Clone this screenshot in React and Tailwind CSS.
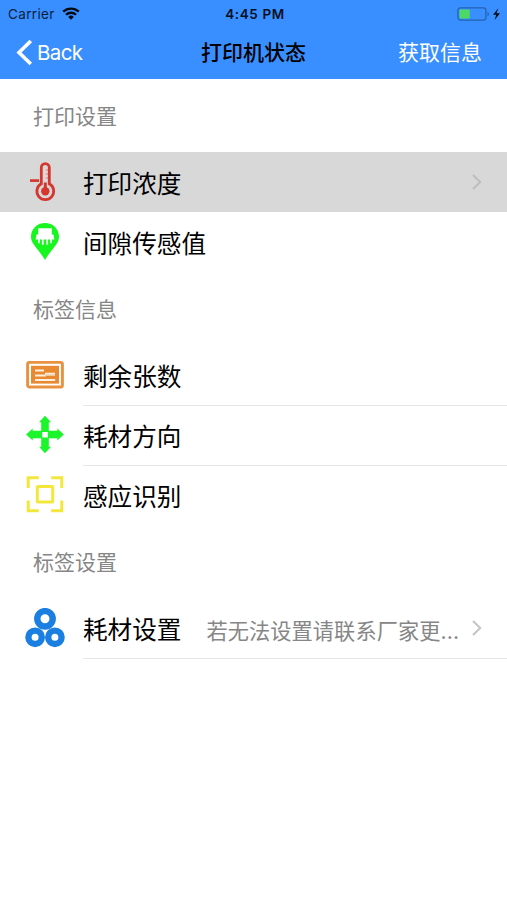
import React from 'react';

const ThermometerIcon = () => (
  <svg className="w-[40px] h-[40px]" viewBox="0 0 40 40" fill="none" stroke="#d5372f">
    <path strokeWidth="2.8" d="M16.3 21.8V5.600a4 4 0 0 1 8 0V21.800a8.400 8.400 0 1 1-8 0z" />
    <path strokeWidth="2.7" d="M5 18.600H14" />
    <path strokeWidth="3" d="M20.300 20.500v7" />
    <circle cx="20.300" cy="29.300" r="4.200" fill="#d5372f" stroke="none" />
    <path strokeWidth="2.200" stroke="#eed6d4" d="M20.300 6v13" />
    <path strokeWidth="1" strokeOpacity="0.5" d="M20.500 8h3M20.500 12h3M20.500 16h3" />
  </svg>
);

const SensorIcon = () => (
  <svg className="w-[40px] h-[40px]" viewBox="0 0 40 40">
    <path fill="#17f61f" d="M20 1C12 1 6 7 6 14.800c0 7.600 6.500 10.500 14 23.200 7.500-12.700 14-15.600 14-23.200C34 7 28 1 20 1z" />
    <path
      fill="#fff"
      d="M13.200 6.300h13.600v6.200h1.600l1 5.100h-2.500v3.600h-1.700v-3.600h-2.100v5.200h-1.700v-5.200h-2.800v5.200h-1.700v-5.200h-2.100v3.600h-1.700v-3.600h-2.500l1-5.100h1.600z"
    />
  </svg>
);

const LabelIcon = () => (
  <svg className="w-[40px] h-[40px]" viewBox="0 0 40 40" fill="none">
    <rect x="2.600" y="7.400" width="34.800" height="24.600" rx="1.800" stroke="#e9913f" strokeWidth="2.900" />
    <rect x="6" y="10.800" width="28" height="17.800" fill="#e98a33" />
    <path stroke="#fdf0e2" strokeWidth="2" d="M10 15.500h9M20 18.800h10M10 20.500h11M10 25h20.200" />
    <path stroke="#f6cfa6" strokeWidth="1" d="M20 20.400h10" />
  </svg>
);

const DirectionIcon = () => (
  <svg className="w-[40px] h-[40px]" viewBox="0 0 40 40" fill="#1bf52b">
    <path
      fillRule="evenodd"
      d="M20 .8l6 6.400h-2.200v8.500h8.500v-2.200L38.900 19.500l-6.600 6v-2.200h-8.500v8.500H26l-6 6.400-6-6.400h2.200v-8.500H7.700v2.200l-6.600-6 6.600-6v2.200h8.500V7.200H14zM17.200 16.900v5.500h5.600v-5.500z"
    />
  </svg>
);

const ScanIcon = () => (
  <svg className="w-[40px] h-[40px]" viewBox="0 0 40 40" fill="none" stroke="#f4e73c">
    <path strokeWidth="3" d="M3.200 13V2.700H13.800M26.200 2.700h10.600V13M36.800 25.500v10.200H26.200M13.800 35.700H3.200V25.500" />
    <rect x="12.300" y="11.600" width="15.400" height="15.400" rx="0.600" strokeWidth="3" />
  </svg>
);

const RollsIcon = () => (
  <svg className="w-[40px] h-[40px]" viewBox="0 0 40 40" fill="none" stroke="#1a7fe0" strokeWidth="6.400">
    <circle cx="20" cy="10.800" r="7.700" />
    <circle cx="10.100" cy="29.300" r="6.700" />
    <circle cx="29.900" cy="29.300" r="6.700" />
  </svg>
);

const sections = [
  {
    title: '打印设置',
    rows: [
      { icon: <ThermometerIcon />, label: '打印浓度', arrow: true, active: true },
      { icon: <SensorIcon />, label: '间隙传感值' },
    ],
  },
  {
    title: '标签信息',
    rows: [
      { icon: <LabelIcon />, label: '剩余张数', line: true },
      { icon: <DirectionIcon />, label: '耗材方向', line: true },
      { icon: <ScanIcon />, label: '感应识别' },
    ],
  },
  {
    title: '标签设置',
    rows: [
      { icon: <RollsIcon />, label: '耗材设置', detail: '若无法设置请联系厂家更...', arrow: true, line: true },
    ],
  },
];

const Row = ({ icon, label, detail, arrow, active, line }) => (
  <div className={`flex h-[60px] pl-[25px] ${active ? 'bg-[#d8d8d8]' : 'bg-white'}`}>
    <div className="flex w-[58px] shrink-0 items-center">{icon}</div>
    <div className="flex min-w-0 flex-1 flex-col">
      <div className="flex flex-1 items-center pr-[24px]">
        <span className="shrink-0 pt-[3px] text-[24.600px] leading-[36px] text-black">{label}</span>
        {detail && (
          <span className="ml-[25px] whitespace-nowrap pt-[5px] text-[21.200px] leading-[32px] tracking-[0.100px] text-[#868686]">
            {detail}
          </span>
        )}
        {arrow && (
          <svg className="ml-auto h-[18px] w-[12px] shrink-0" viewBox="0 0 12 18" fill="none">
            <path d="M2 2l7.200 7L2 16" stroke={active ? '#bdbdbd' : '#c4c4c6'} strokeWidth="2" />
          </svg>
        )}
      </div>
      {/* Separator hangs on the row's bottom edge */}
      <div className={`-mb-[1px] h-[1px] ${line ? 'bg-[#e6e6e6]' : ''}`} />
    </div>
  </div>
);

const App = () => {
  return (
    <div className="h-[900px] w-full overflow-hidden bg-white font-['Inter','Noto_Sans_CJK_SC',sans-serif]">
      <header className="h-[79px] bg-[#398fff]">
        {/* Status bar */}
        <div className="grid h-[27px] grid-cols-3 items-center pl-[8px] pr-[5px] text-[13.500px] text-[#0b1f3c]">
          <div className="flex items-center gap-[7px]">
            <span className="pt-[1px] tracking-[0.350px]">Carrier</span>
            <svg className="h-[13px] w-[18px]" viewBox="0 0 18 13" fill="none" stroke="#050b14" strokeWidth="2.300">
              <path d="M1.200 4.700a11.200 11.200 0 0 1 15.600 0" />
              <path d="M4 7.800a7.100 7.100 0 0 1 10 0" />
              <path d="M9 12.700L6.200 9.900a4 4 0 0 1 5.600 0z" fill="#050b14" stroke="none" />
            </svg>
          </div>
          <div className="pt-[1px] text-center font-semibold tracking-[0.600px] text-[#06101f]">4:45 PM</div>
          <div className="flex items-center justify-end">
            <svg className="h-[14px] w-[45px]" viewBox="0 0 45 14">
              <rect x="0.900" y="0.900" width="28" height="12.200" rx="2.500" fill="none" stroke="#2563b0" strokeWidth="1.300" />
              <rect x="2.500" y="2.500" width="10.300" height="9" rx="1" fill="#4cd964" />
              <path d="M30.500 4.700a2.500 2.500 0 0 1 0 4.600z" fill="#2563b0" />
              <path d="M41.300 1.300L36 7.800h3.300l-1.700 5.100 5.400-6.600h-3.500z" fill="#050b14" />
            </svg>
          </div>
        </div>
        {/* Navigation bar */}
        <div className="grid h-[52px] grid-cols-3 items-center pb-[1px] pl-[16px] pr-[25px]">
          <div className="flex items-center gap-[4px] text-[20.500px] text-white">
            <svg className="h-[27px] w-[17px]" viewBox="0 0 17 27" fill="none">
              <path d="M14.800 2L3 13.500 14.800 25" stroke="#fff" strokeWidth="3.600" />
            </svg>
            <span className="pt-[2px] tracking-[-0.600px]">Back</span>
          </div>
          <h1 className="whitespace-nowrap pl-[9px] pt-[1px] text-center text-[21px] font-medium text-black">打印机状态</h1>
          <button className="whitespace-nowrap pt-[1px] text-right text-[21px] text-white">获取信息</button>
        </div>
      </header>

      {sections.map((section) => (
        <section key={section.title}>
          <h2 className="flex h-[73px] items-center pl-[33px] pt-[2px] text-[21px] text-[#868686]">{section.title}</h2>
          {section.rows.map((row) => (
            <Row key={row.label} {...row} />
          ))}
        </section>
      ))}
    </div>
  );
};

export default App;
